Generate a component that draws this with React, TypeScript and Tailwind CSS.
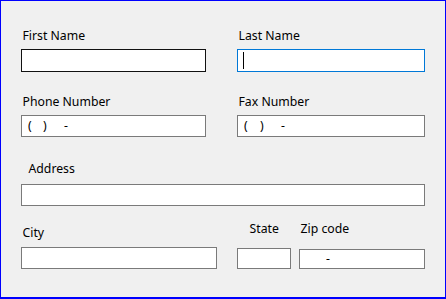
import React from "react";

function Mask({ parts }: { parts: { t: string; w: number }[] }) {
  return (
    <div className="flex h-full items-center">
      {parts.map((p, i) => (
        <span key={i} className="block shrink-0 leading-[16px]" style={{ width: p.w }}>
          {p.t}
        </span>
      ))}
    </div>
  );
}

export default function App() {
  return (
    <div className="box-border h-[299px] w-[446px] border-t border-l border-r border-b-2 border-[#0000ff] bg-[#f0f0f0] font-['Noto_Sans',sans-serif] text-[12.25px] text-black">
      {/* Row: names */}
      <div className="flex gap-[31px] pl-[20px] pt-[27px]">
        <div className="flex w-[185px] flex-col">
          <div className="h-[16px] pl-[1.5px] leading-[16px]">First Name</div>
          <div className="mt-[5px] box-border h-[23px] border border-[#111111] bg-white" />
        </div>
        <div className="flex w-[188px] flex-col">
          <div className="h-[16px] pl-[1.5px] leading-[16px]">Last Name</div>
          <div className="mt-[5px] box-border flex h-[23px] items-start border border-[#0078d7] bg-white pl-[5px] pt-[2px]">
            <div className="h-[17px] w-[1px] bg-black" />
          </div>
        </div>
      </div>

      {/* Row: phone / fax */}
      <div className="mt-[22px] flex gap-[31px] pl-[20px]">
        <div className="flex w-[185px] flex-col">
          <div className="h-[16px] pl-[1.5px] leading-[16px]">Phone Number</div>
          <div className="mt-[5px] box-border h-[22px] border border-[#7a7a7a] bg-white pl-[6px]">
            <Mask
              parts={[
                { t: "(", w: 15 },
                { t: ")", w: 21 },
                { t: "-", w: 10 },
              ]}
            />
          </div>
        </div>
        <div className="flex w-[188px] flex-col">
          <div className="h-[16px] pl-[1.5px] leading-[16px]">Fax Number</div>
          <div className="mt-[5px] box-border h-[22px] border border-[#7a7a7a] bg-white pl-[6px]">
            <Mask
              parts={[
                { t: "(", w: 16 },
                { t: ")", w: 21 },
                { t: "-", w: 10 },
              ]}
            />
          </div>
        </div>
      </div>

      {/* Row: address */}
      <div className="mt-[24px] flex flex-col pl-[20px]">
        <div className="h-[16px] pl-[7.5px] leading-[16px]">Address</div>
        <div className="mt-[7px] box-border h-[22px] w-[404px] border border-[#7a7a7a] bg-white" />
      </div>

      {/* Row: city / state / zip */}
      <div className="mt-[15px] flex pl-[20px]">
        <div className="flex w-[196px] flex-col">
          <div className="mt-[4px] h-[16px] pl-[1.5px] leading-[16px]">City</div>
          <div className="mt-[6px] box-border h-[22px] border border-[#7a7a7a] bg-white" />
        </div>
        <div className="ml-[20px] flex w-[54px] flex-col">
          <div className="h-[16px] pl-[12.5px] leading-[16px]">State</div>
          <div className="mt-[11px] box-border h-[21px] border border-[#7a7a7a] bg-white" />
        </div>
        <div className="ml-[8px] flex w-[126px] flex-col">
          <div className="h-[16px] pl-[1.5px] leading-[16px]">Zip code</div>
          <div className="mt-[12px] box-border h-[20px] border border-[#7a7a7a] bg-white pl-[26px]">
            <Mask parts={[{ t: "-", w: 10 }]} />
          </div>
        </div>
      </div>
    </div>
  );
}
